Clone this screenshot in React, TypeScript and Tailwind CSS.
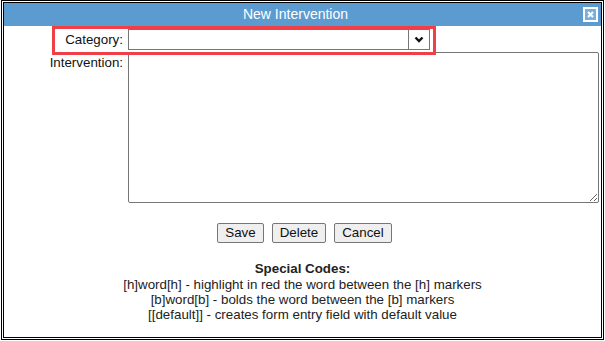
export default function App() {
  const font = { fontFamily: '"Liberation Sans", Arial, sans-serif' };

  return (
    <div className="w-[605px] h-[341px] bg-white px-px pb-px overflow-hidden" style={font}>
      <div className="h-full border border-black p-px">
        <div className="h-full border border-black flex flex-col">
          {/* Title bar */}
          <div className="h-[23px] bg-[#5b9bd0] relative flex items-center justify-center pr-[14px] text-white text-[14px]">
            New Intervention
            <div className="absolute right-[3px] top-[4px] w-[15px] h-[15px] border-2 border-white bg-[#7aaedb] flex items-center justify-center">
              <svg width="7" height="7" viewBox="0 0 7 7">
                <path d="M1 1 L6 6 M6 1 L1 6" stroke="white" strokeWidth="2" />
              </svg>
            </div>
          </div>

          {/* Form */}
          <div className="relative flex flex-col px-[1px] pt-[3px] text-[13.33px] text-[#111]">
            {/* Category */}
            <div className="flex items-center h-[21px]">
              <div className="w-[119px] text-right pr-px">Category:</div>
              <div className="ml-[4px] w-[302px] h-[21px] border border-[#767676] flex bg-white">
                <div className="flex-1" />
                <div className="w-[21px] border-l border-[#767676] flex items-center justify-center">
                  <svg width="10" height="7" viewBox="0 0 10 7">
                    <path d="M1.5 1.5 L5 5 L8.5 1.5" stroke="#111" strokeWidth="2.4" fill="none" />
                  </svg>
                </div>
              </div>
            </div>

            {/* Intervention */}
            <div className="flex items-start mt-[2px]">
              <div className="w-[119px] text-right pr-px pt-[1px]">Intervention:</div>
              <textarea
                className="ml-[4px] w-[471px] h-[151px] border border-[#767676] rounded-[2px] outline-none resize"
                defaultValue=""
              />
            </div>

            {/* Buttons */}
            <div className="flex justify-center gap-[8px] mt-[20px] pl-[4px]">
              <button className="h-[20px] px-[7px] bg-[#efefef] border border-[#767676] rounded-[2px] text-[13.33px] leading-none text-[#111]">
                Save
              </button>
              <button className="h-[20px] px-[7px] bg-[#efefef] border border-[#767676] rounded-[2px] text-[13.33px] leading-none text-[#111]">
                Delete
              </button>
              <button className="h-[20px] px-[7px] bg-[#efefef] border border-[#767676] rounded-[2px] text-[13.33px] leading-none text-[#111]">
                Cancel
              </button>
            </div>

            {/* Special codes */}
            <div className="mt-[18px] text-center leading-[15px] text-[#222]">
              <div className="font-bold leading-[16px]">Special Codes:</div>
              <div>[h]word[h] - highlight in red the word between the [h] markers</div>
              <div>[b]word[b] - bolds the word between the [b] markers</div>
              <div>[[default]] - creates form entry field with default value</div>
            </div>

            {/* Highlight annotation */}
            <div className="absolute left-[48px] top-0 w-[384px] h-[29px] border-[3px] border-[#ef3f47] pointer-events-none" />
          </div>
        </div>
      </div>
    </div>
  );
}
